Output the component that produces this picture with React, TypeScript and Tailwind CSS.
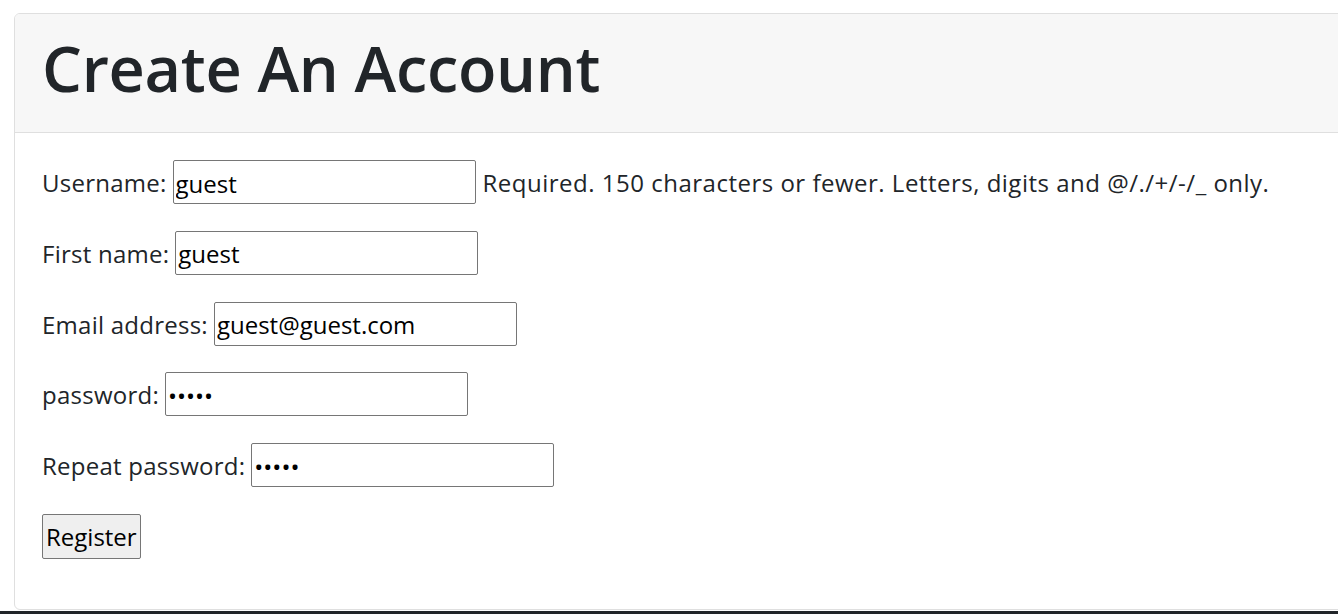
import React from 'react'

const font = { fontFamily: '"Open Sans", "Noto Sans", sans-serif' }

const fields = [
  { label: 'Username:', value: 'guest', type: 'text', help: 'Required. 150 characters or fewer. Letters, digits and @/./+/-/_ only.' },
  { label: 'First name:', value: 'guest', type: 'text' },
  { label: 'Email address:', value: 'guest@guest.com', type: 'email' },
  { label: 'password:', value: 'guest', type: 'password' },
  { label: 'Repeat password:', value: 'guest', type: 'password' },
]

export default function App() {
  return (
    <div className="w-[1338px] h-[614px] overflow-hidden bg-white flex flex-col">
      <div className="flex-1 pt-[13px] pl-[14px]">
        <div
          className="w-[1340px] h-[597px] border border-[#dfdfdf] rounded-[6px] overflow-hidden text-[#212529]"
          style={font}
        >
          {/* Header */}
          <div className="h-[119px] bg-[#f7f7f7] border-b border-[#dfdfdf] pl-[27px] pt-[18px]">
            <h1 className="text-[63px] leading-[72px] font-semibold tracking-[-0.3px]">Create An Account</h1>
          </div>

          {/* Body */}
          <form className="pl-[27px] pt-[27px]" onSubmit={(e) => e.preventDefault()}>
            {fields.map(({ label, value, type, help }) => (
              <div key={label} className="flex items-center h-[44px] mb-[26.8px] text-[24px]">
                <span className="pt-[2px] tracking-[0.25px]">{label}</span>
                <input
                  type={type}
                  defaultValue={value}
                  className="ml-[6px] w-[303px] h-[44px] border border-[#767676] rounded-[2px] px-[2px] pt-[2px] text-[24px] text-black"
                />
                {help && <span className="ml-[7px] pt-[2px] tracking-[0.5px]">{help}</span>}
              </div>
            ))}
            <button
              type="submit"
              className="h-[45px] px-[3px] pt-[2px] bg-[#efefef] border border-[#767676] rounded-[2px] text-[24px] text-black"
            >
              Register
            </button>
          </form>
        </div>
      </div>
      <div className="h-[3px] bg-[#212529]" />
    </div>
  )
}
